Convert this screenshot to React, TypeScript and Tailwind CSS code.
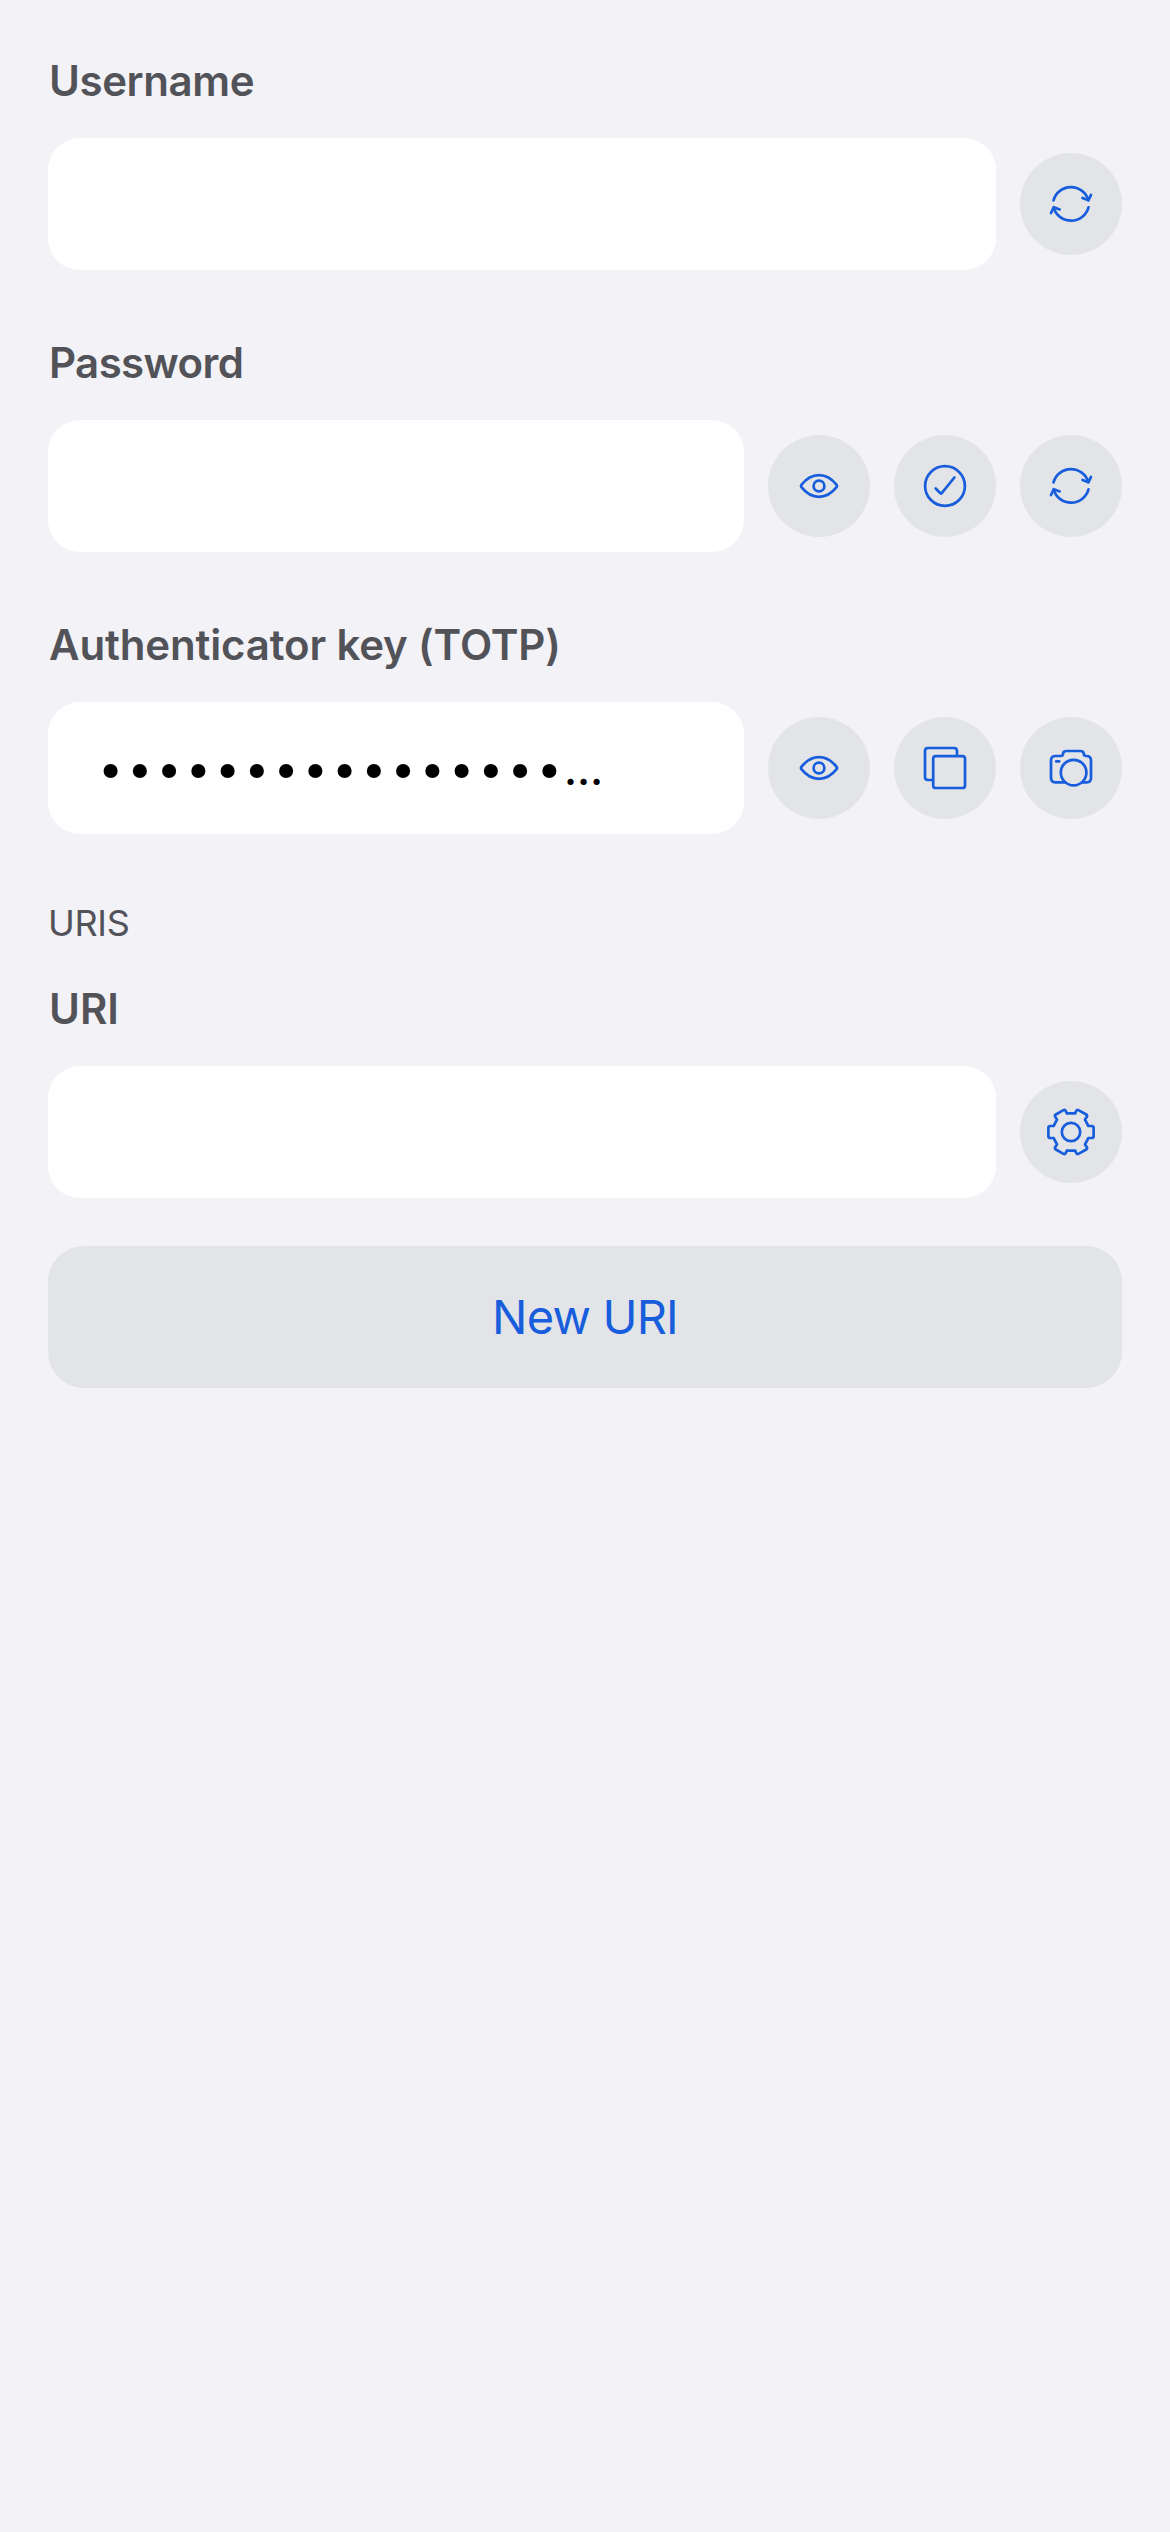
import type { ReactNode } from "react";

function Icon({ children }: { children: ReactNode }) {
  return (
    <svg
      viewBox="0 0 102 102"
      className="size-full"
      fill="none"
      stroke="currentColor"
      strokeWidth="2.7"
      strokeLinecap="round"
      strokeLinejoin="round"
      aria-hidden="true"
    >
      {children}
    </svg>
  );
}

const RefreshIcon = () => (
  <Icon>
    <path d="M33.5 47.4A18.1 18.1 0 0 1 68.3 47" />
    <path d="M62.5 45L68.4 47.3L71 41.9" />
    <path d="M68.5 54.4A18.1 18.1 0 0 1 33.7 54.8" />
    <path d="M39.7 56.4L33.7 54.2L31 60" />
  </Icon>
);

const EyeIcon = () => (
  <Icon>
    <path d="M33.4 52.2Q32.6 51 33.4 49.8C38 44 44.4 40.1 51 40.1S64 44 68.6 49.8Q69.4 51 68.6 52.2C64 58 57.6 61.9 51 61.9S38 58 33.4 52.2Z" />
    <circle cx="51" cy="51" r="5.4" />
  </Icon>
);

const CheckIcon = () => (
  <Icon>
    <circle cx="51" cy="51" r="19.9" />
    <path d="M41.7 53.5L46.4 58.2Q47.1 58.8 47.7 58.1L60.4 42.5" />
  </Icon>
);

const CopyIcon = () => (
  <Icon>
    <path d="M63 38.5V34Q63 31 60 31H34Q31 31 31 34V60Q31 63 34 63H38.5" />
    <rect x="39.2" y="39.2" width="31.8" height="31.8" rx="2.6" />
  </Icon>
);

const CameraIcon = () => (
  <Icon>
    <path d="M45.5 65.3H35.5Q31 65.3 31 61V43.4Q31 39 35.5 39H40.5Q43 39 43 36.8Q43.2 34 46.4 34H60.4Q63.6 34 63.8 36.8Q63.8 39 66.3 39Q71 39 71 43.4V61Q71 65.3 66.8 65.3H62" />
    <circle cx="53.6" cy="55.6" r="12.8" />
    <path d="M36.2 44.4H39.2" />
  </Icon>
);

const GearIcon = () => (
  <Icon>
    <path d="M46.8 32.4H55.2L56.3 29.8Q57 28.4 58.5 29.1L66.2 33.5Q67.5 34.3 66.9 35.7L65 38.6L68.4 45H71.8Q73.6 45 73.6 46.8V55.2Q73.6 57 71.8 57H68.4L65 63.4L66.9 66.3Q67.5 67.7 66.2 68.5L58.5 72.9Q57 73.6 56.3 72.2L55.2 69.6H46.8L45.7 72.2Q45 73.6 43.5 72.9L35.8 68.5Q34.5 67.7 35.1 66.3L37 63.4L33.6 57H30.2Q28.4 57 28.4 55.2V46.8Q28.4 45 30.2 45H33.6L37 38.6L35.1 35.7Q34.5 34.3 35.8 33.5L43.5 29.1Q45 28.4 45.7 29.8Z" />
    <circle cx="51" cy="51" r="9.2" />
  </Icon>
);

function RoundButton({ label, children }: { label: string; children: ReactNode }) {
  return (
    <button
      type="button"
      aria-label={label}
      className="size-[102px] shrink-0 rounded-full bg-[#e2e4e8] text-[#175ddc]"
    >
      {children}
    </button>
  );
}

interface FieldProps {
  label: string;
  tracking?: string;
  value?: ReactNode;
  children: ReactNode;
}

function Field({ label, tracking = "", value, children }: FieldProps) {
  return (
    <div>
      <div
        className={`h-[60px] pl-px text-[42px] leading-[60px] font-semibold whitespace-nowrap text-[#525259] ${tracking}`}
      >
        {label}
      </div>
      <div className="mt-[27px] flex items-center gap-6">
        <div className="flex h-[132px] min-w-0 flex-1 items-center overflow-hidden rounded-[32px] bg-white pl-12 text-black">
          {value}
        </div>
        {children}
      </div>
    </div>
  );
}

const maskedKey = (
  <div className="flex items-baseline leading-[60px] whitespace-nowrap">
    <span className="translate-y-[4px] font-['DejaVu_Sans_Mono',monospace] text-[48.6px]">{"•".repeat(16)}</span>
    <span className="text-[43px] font-medium">…</span>
  </div>
);

export default function App() {
  return (
    <main className="flex h-[2532px] w-[1170px] flex-col bg-[#f2f2f7] px-12 pt-[51px] font-['Inter',sans-serif]">
      <div className="flex flex-col gap-[63px]">
        <Field label="Username" tracking="tracking-[-0.4px]">
          <RoundButton label="Generate username"><RefreshIcon /></RoundButton>
        </Field>
        <Field label="Password" tracking="tracking-[-0.6px]">
          <RoundButton label="Show password"><EyeIcon /></RoundButton>
          <RoundButton label="Check password"><CheckIcon /></RoundButton>
          <RoundButton label="Generate password"><RefreshIcon /></RoundButton>
        </Field>
        <Field label="Authenticator key (TOTP)" tracking="tracking-[-0.15px]" value={maskedKey}>
          <RoundButton label="Show key"><EyeIcon /></RoundButton>
          <RoundButton label="Copy key"><CopyIcon /></RoundButton>
          <RoundButton label="Scan code"><CameraIcon /></RoundButton>
        </Field>
      </div>
      <h2 className="mt-[62px] mb-[29px] h-[54px] text-[36px] leading-[54px] tracking-[-0.3px] text-[#525259]">
        URIS
      </h2>
      <Field label="URI">
        <RoundButton label="URI options"><GearIcon /></RoundButton>
      </Field>
      <button
        type="button"
        className="mt-12 h-[142px] rounded-[36px] bg-[#e2e4e8] text-[47px] leading-[60px] tracking-[-0.8px] text-[#175ddc]"
      >
        New URI
      </button>
    </main>
  );
}
